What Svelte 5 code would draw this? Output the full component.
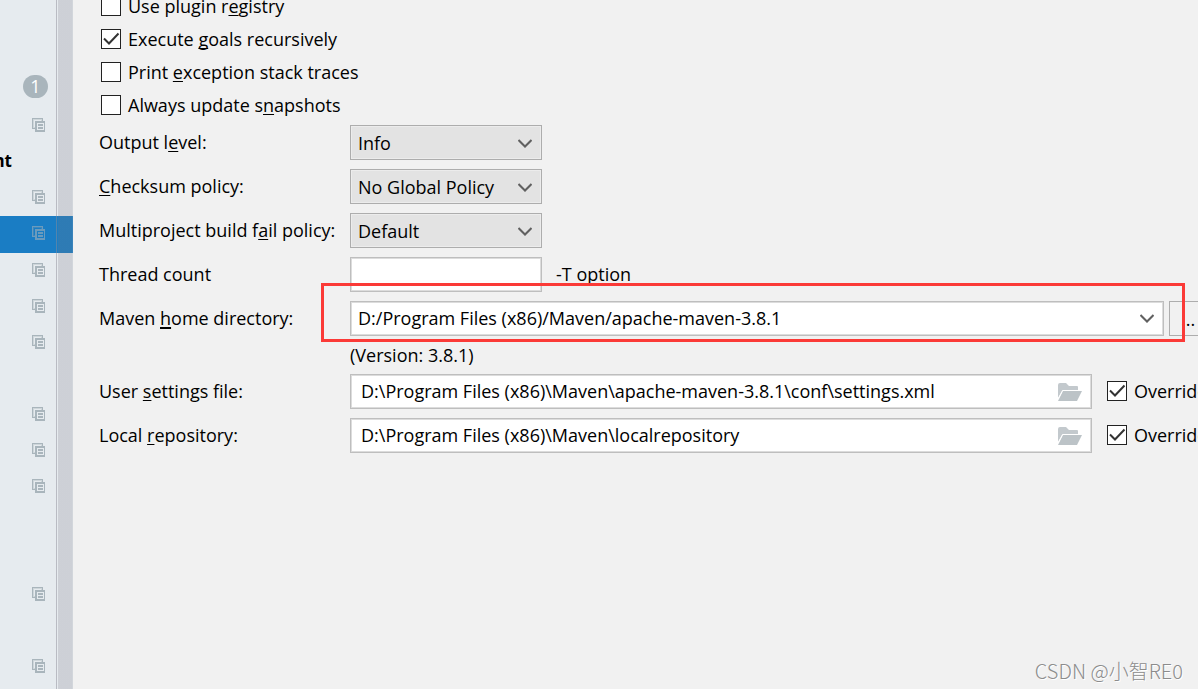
<script lang="ts">
	type Row = { kind: 'badge' | 'icon' | 'text' | 'blank'; label?: string; selected?: boolean };

	const rows: Row[] = [
		{ kind: 'badge', label: '1' },
		{ kind: 'icon' },
		{ kind: 'text', label: 'nt' },
		{ kind: 'icon' },
		{ kind: 'icon', selected: true },
		{ kind: 'icon' },
		{ kind: 'icon' },
		{ kind: 'icon' },
		{ kind: 'blank' },
		{ kind: 'icon' },
		{ kind: 'icon' },
		{ kind: 'icon' },
		{ kind: 'blank' },
		{ kind: 'blank' },
		{ kind: 'icon' },
		{ kind: 'blank' },
		{ kind: 'icon' }
	];

	// [before, mnemonic, after]
	let options = $state([
		{ id: 'registry', text: ['Use plugin r', 'e', 'gistry'], checked: false },
		{ id: 'recursive', text: ['Execute ', 'g', 'oals recursively'], checked: true },
		{ id: 'traces', text: ['Print ', 'e', 'xception stack traces'], checked: false },
		{ id: 'snapshots', text: ['Always update s', 'n', 'apshots'], checked: false }
	]);

	const policies = [
		{ id: 'output', text: ['Output l', 'e', 'vel:'], values: ['Info', 'Debug', 'Disabled'] },
		{ id: 'checksum', text: ['', 'C', 'hecksum policy:'], values: ['No Global Policy', 'Fail', 'Warn'] },
		{ id: 'fail', text: ['Multiproject build f', 'a', 'il policy:'], values: ['Default', 'Fail Fast', 'Fail Never'] }
	];

	let threads = $state('');
	let home = $state('D:/Program Files (x86)/Maven/apache-maven-3.8.1');

	let paths = $state([
		{
			id: 'settings',
			text: ['User ', 's', 'ettings file:'],
			value: 'D:\\Program Files (x86)\\Maven\\apache-maven-3.8.1\\conf\\settings.xml',
			override: true
		},
		{
			id: 'repository',
			text: ['Local ', 'r', 'epository:'],
			value: 'D:\\Program Files (x86)\\Maven\\localrepository',
			override: true
		}
	]);
</script>

{#snippet mnemonic(text: string[])}{text[0]}<u>{text[1]}</u>{text[2]}{/snippet}

{#snippet chevron()}
	<svg class="chevron" width="14" height="9" viewBox="0 0 14 9" aria-hidden="true">
		<path d="M0.5 1 L7 7.5 L13.5 1" fill="none" stroke="#606060" stroke-width="2" />
	</svg>
{/snippet}

<div class="dialog">
	<nav class="sidebar" aria-label="Settings">
		<ul class="tree">
			{#each rows as row}
				<li class="row {row.kind}" class:selected={row.selected}>
					{#if row.kind === 'icon'}
						<svg width="13" height="14" viewBox="0 0 13 14" shape-rendering="crispEdges" aria-hidden="true">
							<path class="line" d="M0 0h11v3h-1v-2h-9v9h2v1h-3z" />
							<path class="soft" d="M1 1h9v2h-1v-1h-7v7h1v1h-2z" />
							<path class="line" fill-rule="evenodd" d="M3 3h10v11h-10z M5 5v7h7v-7z" />
							<path class="line" d="M6 6h5v2h-5z M6 9h5v2h-5z" />
						</svg>
					{:else if row.label}
						<span>{row.label}</span>
					{/if}
				</li>
			{/each}
		</ul>
		<div class="scrollbar"></div>
	</nav>

	<main class="panel">
		<div class="checks">
			{#each options as option (option.id)}
				<label class="check">
					<input type="checkbox" bind:checked={option.checked} />
					<span>{@render mnemonic(option.text)}</span>
				</label>
			{/each}
		</div>

		<div class="form">
			{#each policies as policy (policy.id)}
				<label for={policy.id}>{@render mnemonic(policy.text)}</label>
				<div class="field">
					<div class="select">
						<select id={policy.id}>
							{#each policy.values as value}
								<option>{value}</option>
							{/each}
						</select>
						{@render chevron()}
					</div>
				</div>
			{/each}

			<label for="threads">Thread count</label>
			<div class="field">
				<input id="threads" class="box short" type="text" bind:value={threads} />
				<span class="hint">-T option</span>
			</div>

			<label for="home">Maven <u class="thick">h</u>ome directory:</label>
			<div class="field home">
				<div class="box combo">
					<input id="home" type="text" bind:value={home} />
					<button type="button" aria-label="Show list">{@render chevron()}</button>
				</div>
				<button type="button" class="browse">...</button>
				<div class="highlight"></div>
			</div>

			<p class="version">(Version: 3.8.1)</p>

			{#each paths as path (path.id)}
				<label for={path.id}>{@render mnemonic(path.text)}</label>
				<div class="field">
					<div class="box file">
						<input id={path.id} type="text" bind:value={path.value} />
						<button type="button" aria-label="Browse">
							<svg width="24" height="18" viewBox="0 0 24 18" aria-hidden="true">
								<path d="M0 15V2Q0 0 2 0h6l3 3h8q1 0 1 1v3H5z" fill="#c3c9cd" />
								<path d="M5 8h19l-5 10H0z" fill="#bcc3c7" />
								<path d="M0 16L4.500 7.500H24" fill="none" stroke="#fff" />
							</svg>
						</button>
					</div>
					<label class="check override">
						<input type="checkbox" bind:checked={path.override} />
						<span>Override</span>
					</label>
				</div>
			{/each}
		</div>

		<div class="watermark">CSDN @小智RE0</div>
	</main>
</div>

<style>
	:global(body) {
		margin: 0;
		background: #f1f1f1;
	}

	.dialog {
		display: flex;
		height: 100vh;
		overflow: hidden;
		background: #f1f1f1;
		color: #000;
		font-family: 'Open Sans', 'Noto Sans CJK SC', sans-serif;
		font-size: 18px;
		line-height: 24px;
	}

	input,
	select,
	button {
		box-sizing: border-box;
		margin: 0;
		padding: 0;
		border: 0;
		border-radius: 0;
		background: none;
		color: inherit;
		font: inherit;
		outline: none;
	}

	u {
		text-decoration-thickness: 1px;
		text-decoration-skip-ink: none;
		text-underline-offset: 2px;
	}

	u.thick {
		text-decoration-thickness: 2px;
	}

	.sidebar {
		position: relative;
		flex: none;
		width: 73px;
		background: #e6ebef;
	}

	.tree {
		margin: 0;
		padding: 72px 0 0;
		list-style: none;
	}

	.row {
		box-sizing: border-box;
		display: flex;
		align-items: center;
		height: 36px;
		padding: 0 0 2px 32px;
	}

	.row.selected {
		height: 37px;
		padding-bottom: 4px;
		background: #1a7dc4;
	}

	.row.badge {
		padding: 0 0 8px 23px;
	}

	.row.badge span {
		width: 25px;
		height: 23px;
		border-radius: 12px;
		background: #a9b5bc;
		color: #fff;
		line-height: 23px;
		text-align: center;
	}

	.row.text {
		justify-content: flex-end;
		width: 12px;
		padding: 0 0 2px;
		font-size: 17px;
		font-weight: 700;
	}

	.line {
		fill: #a9b5bc;
	}

	.soft {
		fill: #ced6da;
	}

	.selected .line {
		fill: #6b9bbd;
	}

	.selected .soft {
		fill: #3c87bd;
	}

	/* lies over the tree, the selected row shines through */
	.scrollbar {
		box-sizing: border-box;
		position: absolute;
		top: 0;
		right: 0;
		bottom: 0;
		width: 17px;
		border-left: 1px solid rgba(150, 150, 160, 0.35);
		border-right: 1px solid rgba(150, 150, 160, 0.25);
		background: linear-gradient(to right, transparent 1px, rgba(120, 115, 125, 0.22) 1px);
	}

	.panel {
		position: relative;
		flex: 1;
		min-width: 0;
		overflow: hidden;
	}

	.checks {
		margin: -11px 0 4px 28px;
	}

	.check {
		display: flex;
		align-items: center;
		gap: 7px;
		height: 33px;
		white-space: nowrap;
	}

	.check input {
		appearance: none;
		flex: none;
		width: 20px;
		height: 20px;
		border: 1px solid #222;
		background: #fff;
	}

	.check input:checked {
		background: #fff url("data:image/svg+xml,%3Csvg xmlns='http://www.w3.org/2000/svg' viewBox='0 0 18 18'%3E%3Cpath d='M2 8.5L7 13.5L16.5 3.5' fill='none' stroke='%23333' stroke-width='2'/%3E%3C/svg%3E");
	}

	.form {
		display: grid;
		grid-template-columns: 242px 1fr;
		gap: 9px;
		padding-left: 26px;
		align-items: center;
		white-space: nowrap;
	}

	.form > label {
		padding-bottom: 1px;
	}

	.field {
		display: flex;
		align-items: center;
		min-width: 0;
		height: 35px;
	}

	.select {
		position: relative;
		width: 192px;
		height: 35px;
	}

	.select select {
		appearance: none;
		width: 100%;
		height: 100%;
		padding: 0 32px 0 7px;
		border: 1px solid #adadad;
		box-shadow: inset 0 0 0 1px #ececec;
		background: #e3e3e3;
	}

	.select .chevron {
		position: absolute;
		top: 14px;
		right: 10px;
		pointer-events: none;
	}

	.box {
		box-sizing: border-box;
		height: 35px;
		border: 1px solid #bebebe;
		box-shadow: inset 0 0 0 1px #dcdcdc;
		background: #fff;
	}

	.short {
		width: 192px;
		padding: 0 8px;
	}

	.hint {
		margin-left: 14px;
		padding-bottom: 2px;
	}

	.home {
		position: relative;
	}

	.combo,
	.file {
		display: flex;
		align-items: center;
		flex: 1;
		min-width: 0;
		padding: 0 9px 0 7px;
	}

	.file {
		padding: 0 9px 0 10px;
	}

	.combo input,
	.file input {
		flex: 1;
		min-width: 0;
		padding-bottom: 2px;
	}

	.combo button,
	.file button {
		display: flex;
	}

	.browse {
		flex: none;
		width: 29px;
		height: 35px;
		margin-left: 5px;
		padding-left: 11px;
		overflow: hidden;
		border: 1px solid #adadad;
		border-right: 0;
		text-align: left;
	}

	.highlight {
		position: absolute;
		inset: -18px 13px -6px -29px;
		border: 3px solid #fb3a37;
		pointer-events: none;
	}

	.version {
		grid-column: 2;
		margin: 0;
		line-height: 20px;
	}

	.override {
		flex: none;
		width: 91px;
		margin-left: 15px;
		padding-bottom: 2px;
	}

	.watermark {
		position: absolute;
		right: 15px;
		bottom: 6px;
		color: #8c8c8c;
		font-family: 'Noto Sans CJK SC', sans-serif;
		font-size: 20px;
		font-weight: 300;
		text-shadow: 1px 1px 0 #fff;
	}
</style>
